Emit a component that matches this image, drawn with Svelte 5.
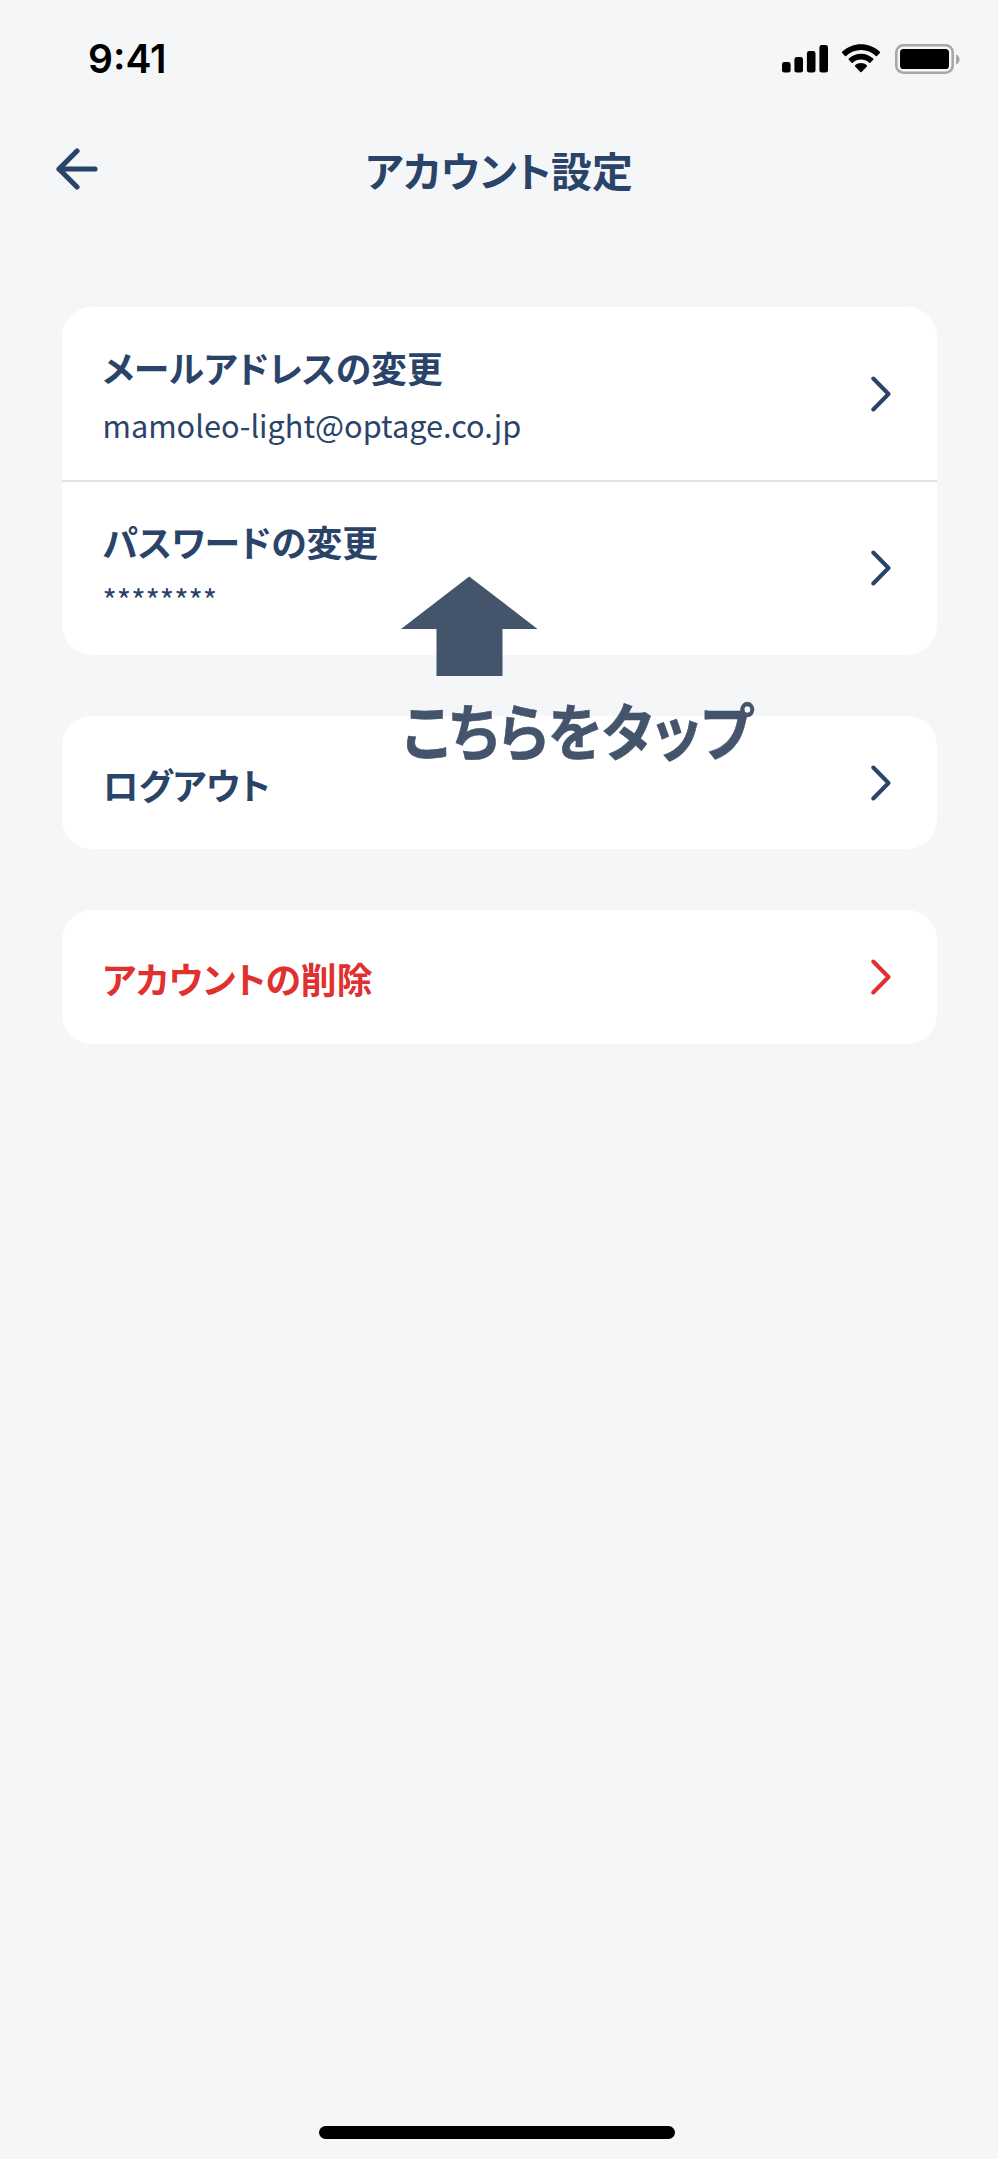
<script lang="ts">
  type Row = { title: string; detail?: string; danger?: boolean };

  const time = '9:41';

  const groups: Row[][] = [
    [
      { title: 'メールアドレスの変更', detail: 'mamoleo-light@optage.co.jp' },
      { title: 'パスワードの変更', detail: '********' }
    ],
    [{ title: 'ログアウト' }],
    [{ title: 'アカウントの削除', danger: true }]
  ];
</script>

<div class="screen">
  <div class="status-bar">
    <span class="time">{time}</span>
    <div class="status-icons">
      <svg class="signal" width="46" height="30" viewBox="0 0 46 30">
        <rect x="0" y="18" width="8.6" height="10.6" rx="2.4" />
        <rect x="12.4" y="13" width="8.6" height="15.6" rx="2.4" />
        <rect x="24.9" y="7" width="8.6" height="21.6" rx="2.4" />
        <rect x="37.4" y="1" width="8.6" height="27.6" rx="2.4" />
      </svg>
      <svg class="wifi" width="42" height="30" viewBox="0 0 42 30">
        <path d="M21 5.9c5.6 0 10.9 2.2 14.9 6.1.3.3.8.3 1.1 0l2.9-3.1c.3-.3.3-.8 0-1.2C29.3-2.4 12.7-2.4 2.1 7.7c-.3.4-.3.9 0 1.2L5 12c.3.3.8.3 1.1 0C10.1 8.1 15.4 5.9 21 5.9z" />
        <path d="M21 15.6c3 0 5.9 1.1 8.2 3.2.3.3.8.3 1.1 0l2.9-3.1c.3-.3.3-.9 0-1.2-6.9-6.4-17.5-6.4-24.4 0-.3.3-.3.9 0 1.2l2.9 3.1c.3.3.8.3 1.1 0 2.3-2.1 5.2-3.2 8.2-3.2z" />
        <path d="M26.9 22.4c.3-.3.3-.9 0-1.2-3.4-2.9-8.4-2.9-11.8 0-.3.3-.3.9 0 1.2l5.3 5.7c.3.3.9.3 1.2 0z" />
      </svg>
      <svg class="battery" width="66" height="30" viewBox="0 0 66 30">
        <rect class="battery-shell" x="1.3" y="1.3" width="56.4" height="27.4" rx="7" />
        <rect x="5" y="5" width="49" height="20" rx="3.6" />
        <path class="battery-cap" d="M61 10.5v10c2.2-.8 3.6-2.8 3.6-5s-1.4-4.2-3.6-5z" />
      </svg>
    </div>
  </div>

  <header class="nav">
    <button class="back" aria-label="戻る">
      <svg width="42" height="42" viewBox="0 0 42 42">
        <path d="M21 3 3 21l18 18M3 21h36" />
      </svg>
    </button>
    <h1>アカウント設定</h1>
  </header>

  <main class="groups">
    {#each groups as rows}
      <section class="card">
        {#each rows as row}
          <div class="row" class:danger={row.danger} class:tall={row.detail}>
            <div class="row-text">
              <span class="row-title">{row.title}</span>
              {#if row.detail}
                <span class="row-detail">{row.detail}</span>
              {/if}
            </div>
            <svg class="chevron" width="20" height="36" viewBox="0 0 20 36">
              <path d="M2.3 2.5 17.5 18 2.3 33.5" />
            </svg>
          </div>
        {/each}
      </section>
    {/each}
  </main>

  <div class="callout">
    <svg width="137" height="100" viewBox="0 0 137 100">
      <path d="M68.2 .5 136.5 53H101.5V100H35.5V53H0z" />
    </svg>
    <span class="callout-text">こちらをタップ</span>
  </div>

  <div class="home-indicator"></div>
</div>

<style>
  :global(body) {
    margin: 0;
    background: #f4f6f8;
  }

  .screen {
    position: relative;
    display: flex;
    flex-direction: column;
    box-sizing: border-box;
    width: 998px;
    height: 2159px;
    overflow: hidden;
    background: #f4f6f8;
    color: #2a4368;
    font-family: 'Noto Sans CJK JP', sans-serif;
    font-feature-settings: 'palt';
  }

  .status-bar {
    display: flex;
    align-items: center;
    justify-content: space-between;
    height: 117px;
    padding: 0 37px 0 88px;
    box-sizing: border-box;
    color: #000;
  }

  .time {
    font-family: Inter, sans-serif;
    font-size: 39px;
    font-weight: 600;
    line-height: 1;
  }

  .status-icons {
    display: flex;
    align-items: center;
    gap: 12px;
  }

  .signal {
    margin-right: 1px;
  }

  .wifi {
    margin-left: -1px;
    margin-right: 1px;
  }

  .battery-shell {
    fill: none;
    stroke: #a6a8aa;
    stroke-width: 2.6;
  }

  .battery-cap {
    fill: #a6a8aa;
  }

  .nav {
    display: grid;
    grid-template-columns: 100px 1fr 100px;
    align-items: center;
    height: 106px;
  }

  .back {
    justify-self: end;
    display: flex;
    margin: 0 2px 3px 0;
    padding: 0;
    border: 0;
    background: none;
  }

  .back path {
    fill: none;
    stroke: #2a4368;
    stroke-width: 5.2;
    stroke-linecap: round;
    stroke-linejoin: round;
  }

  h1 {
    margin: 0;
    font-size: 40.8px;
    font-weight: 700;
    line-height: 60px;
    text-align: center;
  }

  .groups {
    display: flex;
    flex-direction: column;
    gap: 61px;
    padding: 84px 61.5px 0;
  }

  .card {
    border-radius: 30px;
    background: #fff;
  }

  .row {
    display: flex;
    align-items: center;
    justify-content: space-between;
    box-sizing: border-box;
    height: 133.3px;
    padding: 0 46px 0 41px;
  }

  .row.tall {
    height: 173px;
  }

  .row + .row.tall {
    height: 175px;
    padding-bottom: 2px;
    border-top: 2px solid #dfe4ec;
  }

  .row-text {
    display: flex;
    flex-direction: column;
    padding-top: 3px;
  }

  .tall .row-text {
    padding-top: 1px;
  }

  .row-title {
    font-size: 35.8px;
    font-weight: 700;
    line-height: 54px;
  }

  .row-detail {
    margin-top: 7px;
    font-size: 30.7px;
    line-height: 48px;
  }

  .chevron path {
    fill: none;
    stroke: #2a4368;
    stroke-width: 4;
    stroke-linecap: round;
    stroke-linejoin: round;
  }

  .danger {
    color: #e03030;
  }

  .danger .chevron path {
    stroke: #e03030;
  }

  .callout {
    position: absolute;
    top: 576px;
    left: 401px;
    display: flex;
    flex-direction: column;
    color: #44546a;
    fill: #44546a;
  }

  .callout-text {
    margin-top: 8px;
    padding-left: 2px;
    font-size: 62px;
    font-weight: 700;
    line-height: 90px;
    white-space: nowrap;
    transform: scaleX(0.905);
    transform-origin: left;
    -webkit-text-stroke: 0.6px #44546a;
  }

  .home-indicator {
    align-self: center;
    width: 356px;
    height: 13px;
    margin: auto 4px 20px 0;
    border-radius: 7px;
    background: #000;
  }
</style>
